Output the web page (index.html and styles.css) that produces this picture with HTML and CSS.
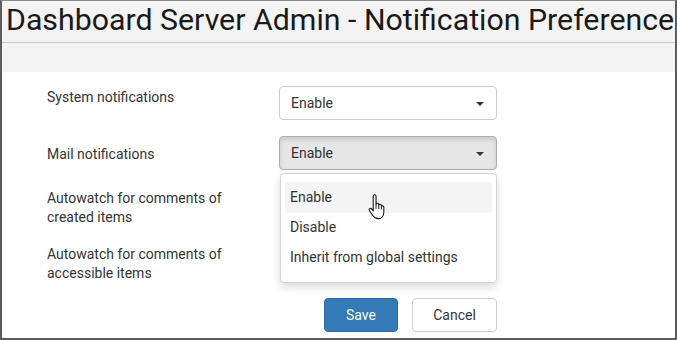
FILE: index.html
```html
<!DOCTYPE html>
<html>
<head>
<meta charset="utf-8">
<link rel="stylesheet" href="styles.css">
</head>
<body>
<div class="frame">
  <div class="header">
    <h1 class="title">Dashboard Server Admin - Notification Preference</h1>
  </div>
  <div class="band"></div>
  <div class="form">
    <div class="row row1">
      <div class="label">System notifications</div>
      <div class="control"><div class="select">Enable<span class="caret"></span></div></div>
    </div>
    <div class="row row2">
      <div class="label">Mail notifications</div>
      <div class="control">
        <div class="select active">Enable<span class="caret"></span></div>
        <div class="menu">
          <div class="item hover">Enable</div>
          <div class="item">Disable</div>
          <div class="item">Inherit from global settings</div>
          <svg class="cursor" width="22" height="26" viewBox="0 0 20 24">
            <path d="M6.5 2.2c0-.9.6-1.5 1.3-1.5s1.3.6 1.3 1.5v7.3c.2-.7.7-1 1.3-1s1.2.4 1.2 1.1v.8c.2-.6.7-.9 1.2-.9.6 0 1.2.4 1.2 1.1v1c.2-.5.6-.8 1.1-.8.7 0 1.2.5 1.2 1.2v4.8c0 3.4-2.2 5.9-5.3 5.9-2.4 0-3.6-1-4.9-2.9L3.1 15.4c-.5-.7-.4-1.5.2-1.9.6-.4 1.4-.2 1.9.4l1.3 1.7V2.2z" fill="#fff" stroke="#111" stroke-width="1" stroke-linejoin="round"/>
            <path d="M9.1 9.5v4.2M11.6 10.5v3.4M14.1 11.6v2.6" stroke="#111" stroke-width="0.9" fill="none"/>
          </svg>
        </div>
      </div>
    </div>
    <div class="row row3">
      <div class="label">Autowatch for comments of<br>created items</div>
      <div class="control"><div class="select hidden">Enable<span class="caret"></span></div></div>
    </div>
    <div class="row row4">
      <div class="label">Autowatch for comments of<br>accessible items</div>
      <div class="control"><div class="select hidden">Enable<span class="caret"></span></div></div>
    </div>
    <div class="row buttons">
      <button class="btn primary">Save</button>
      <button class="btn default">Cancel</button>
    </div>
  </div>
</div>
</body>
</html>
```
FILE: styles.css
```css
html, body {
  margin: 0;
  padding: 0;
  background: #fff;
}
.frame {
  width: 677px;
  height: 340px;
  box-sizing: border-box;
  border: 2px solid #5c5c5c;
  border-top: 1px solid #8a8a8a;
  overflow: hidden;
  font-family: Roboto, "Liberation Sans", sans-serif;
  color: #333;
}
.header {
  background: #f3f3f3;
  height: 41px;
  border-bottom: 1px solid #c6c6c6;
  padding-left: 4px;
}
.title {
  margin: 0;
  font-weight: 400;
  font-size: 30.3px;
  line-height: 38px;
  color: #1a1a1a;
  white-space: nowrap;
}
.band {
  background: #f3f3f3;
  height: 29px;
}
.form {
  padding-top: 14px;
  padding-left: 45px;
  font-size: 14px;
}
.row {
  display: flex;
  align-items: flex-start;
}
.label {
  width: 232px;
  line-height: 19px;
}
.row1 { height: 50px; }
.row1 .label { padding-top: 2px; }
.row2 { height: 50px; }
.row2 .label { padding-top: 9px; }
.row3 { height: 56px; }
.row3 .label { padding-top: 3px; }
.row4 { height: 56px; }
.row4 .label { padding-top: 3px; }
.control {
  position: relative;
  width: 218px;
}
.select {
  box-sizing: border-box;
  height: 34px;
  border: 1px solid #ccc;
  border-radius: 4px;
  background: #fff;
  padding-left: 11px;
  line-height: 32px;
  position: relative;
}
.select.hidden {
  visibility: hidden;
}
.select.active {
  background: #e6e6e6;
  border-color: #adadad;
  box-shadow: inset 0 3px 5px rgba(0,0,0,0.125);
}
.caret {
  position: absolute;
  right: 12px;
  top: 15px;
  width: 0;
  height: 0;
  border-left: 4px solid transparent;
  border-right: 4px solid transparent;
  border-top: 4px solid #333;
}
.menu {
  position: absolute;
  top: 37px;
  left: 1px;
  width: 217px;
  box-sizing: border-box;
  background: #fff;
  border: 1px solid #d4d4d4;
  border-radius: 4px;
  box-shadow: 0 4px 10px rgba(0,0,0,0.15);
  padding: 8px 4px 10px;
  z-index: 10;
}
.item {
  height: 31px;
  line-height: 31px;
  padding-left: 5px;
  border-radius: 3px;
  margin-bottom: -1px;
}
.item.hover {
  background: #f4f4f4;
}
.cursor {
  position: absolute;
  left: 85px;
  top: 20px;
}
.buttons {
  padding-left: 277px;
  gap: 14px;
}
.btn {
  font-family: Roboto, "Liberation Sans", sans-serif;
  font-size: 14px;
  height: 34px;
  border-radius: 4px;
  box-sizing: border-box;
  padding: 0;
  cursor: pointer;
}
.btn.primary {
  width: 74px;
  background: #337ab7;
  border: 1px solid #2e6da4;
  color: #fff;
}
.btn.default {
  width: 85px;
  background: #fff;
  border: 1px solid #ccc;
  color: #333;
}
```
